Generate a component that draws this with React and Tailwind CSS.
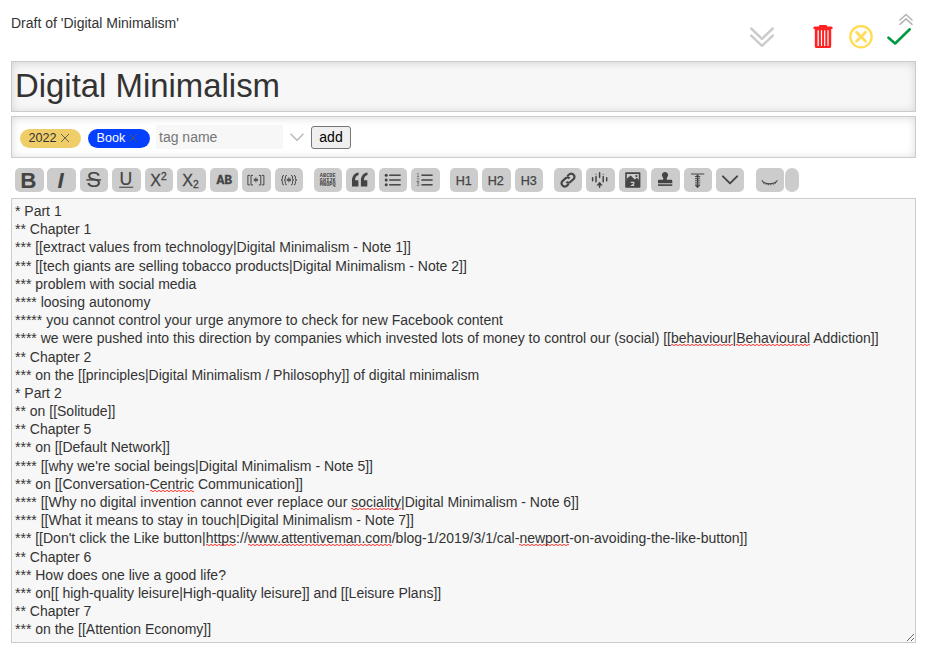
import React from 'react';

const INK = '#444';

function Tool({ children, className = '' }) {
  return (
    <button className={`h-6 w-[28.5px] shrink-0 rounded-[5px] bg-[#cccccc] ${className}`}>
      <svg viewBox="0 0 28.5 24" className="block h-6 w-[28.5px]" fill={INK} stroke="none">
        {children}
      </svg>
    </button>
  );
}

const sans = '"Liberation Sans", Arial, sans-serif';
const mono = '"Liberation Mono", monospace';

function T({ x = 14, y, size, family = sans, anchor = 'middle', children, ...rest }) {
  return (
    <text x={x} y={y} fontSize={size} fontFamily={family} textAnchor={anchor} {...rest}>
      {children}
    </text>
  );
}

function Heading({ n }) {
  return (
    <Tool>
      <T x="13.7" y="17" size="12.6" stroke={INK} strokeWidth="0.25">{`H${n}`}</T>
    </Tool>
  );
}

function Star() {
  return (
    <path d="M13.9 9.3V14.3M11.7 11L16.1 12.6M16.1 11L11.7 12.6" fill="none" stroke={INK} strokeWidth="1" />
  );
}

function Toolbar() {
  return (
    <div className="mt-[10px] ml-1 flex h-6">
      <div className="flex gap-[3.95px]">
        <Tool><T x="13.4" y="19.5" size="22.4" fontWeight="bold">B</T></Tool>
        <Tool><T x="13.5" y="19.5" size="22.4" fontWeight="bold" fontStyle="italic">I</T></Tool>
        <Tool>
          <T x="13.6" y="19.2" size="21.5">S</T>
          <rect x="6.3" y="11.2" width="14.8" height="1.4" />
        </Tool>
        <Tool>
          <T x="13.9" y="16.6" size="17.6" stroke={INK} strokeWidth="0.2">U</T>
          <rect x="7.2" y="18.7" width="14" height="1.1" />
        </Tool>
        <Tool>
          <T x="10.7" y="17.9" size="16" stroke={INK} strokeWidth="0.3">X</T>
          <T x="18.8" y="11.9" size="10.3" stroke={INK} strokeWidth="0.3">2</T>
        </Tool>
        <Tool>
          <T x="10.6" y="17.7" size="16" stroke={INK} strokeWidth="0.3">X</T>
          <T x="18.8" y="19.6" size="10.3" stroke={INK} strokeWidth="0.3">2</T>
        </Tool>
        <Tool>
          <T x="14.2" y="16" size="12" family={mono} fontWeight="bold" stroke={INK} strokeWidth="0.3" textLength="15.6" lengthAdjust="spacingAndGlyphs">AB</T>
        </Tool>
        <Tool>
          <path d="M7.9 7.4H5.9V16.9H7.9M11 7.4H9V16.9H11M16.8 7.4H18.8V16.9H16.8M19.9 7.4H21.9V16.9H19.9" fill="none" stroke={INK} strokeWidth="1" />
          <Star />
        </Tool>
        <Tool>
          <path d="M8.9 7.4Q7.4 7.4 7.4 9V10.8Q7.4 12.1 6 12.1Q7.4 12.1 7.4 13.4V15.3Q7.4 16.9 8.9 16.9M11.8 7.4Q10.3 7.4 10.3 9V10.8Q10.3 12.1 9 12.1Q10.3 12.1 10.3 13.4V15.3Q10.3 16.9 11.8 16.9M16 7.4Q17.5 7.4 17.5 9V10.8Q17.5 12.1 18.8 12.1Q17.5 12.1 17.5 13.4V15.3Q17.5 16.9 16 16.9M18.9 7.4Q20.4 7.4 20.4 9V10.8Q20.4 12.1 21.8 12.1Q20.4 12.1 20.4 13.4V15.3Q20.4 16.9 18.9 16.9" fill="none" stroke={INK} strokeWidth="1" />
          <Star />
        </Tool>
      </div>
      <div className="ml-[10.9px] flex gap-[3.95px]">
        <Tool>
          <T x="13.7" y="8.9" size="5.2" family={mono} fontWeight="bold" textLength="16">ABCDE</T>
          <T x="13.7" y="13.6" size="5.2" family={mono} fontWeight="bold" textLength="16">GHIJK</T>
          <T x="13.7" y="18.3" size="5.2" family={mono} fontWeight="bold" textLength="16">MNOPQ</T>
        </Tool>
        <Tool>
          <path d="M12.6 4.6C8.6 5 6 8.2 6 12.6V18.6H12.4V12.2H9.1C9.1 9.4 10.2 7.7 12.6 7.1Z" />
          <path d="M21.5 4.6C17.5 5 14.9 8.2 14.9 12.6V18.6H21.3V12.2H18C18 9.4 19.1 7.7 21.5 7.1Z" />
        </Tool>
        <Tool>
          {[7.2, 12, 16.8].map((y) => (
            <g key={y}>
              <circle cx="7.2" cy={y} r="1.5" />
              <rect x="10.2" y={y - 0.75} width="11.5" height="1.5" />
            </g>
          ))}
        </Tool>
        <Tool>
          {[7.2, 12, 16.8].map((y, i) => (
            <g key={y}>
              <T x="7" y={y + 1.6} size="5">{i + 1}</T>
              <rect x="10.4" y={y - 0.75} width="11.2" height="1.5" />
            </g>
          ))}
        </Tool>
      </div>
      <div className="ml-[10.2px] flex gap-[3.95px]">
        <Heading n={1} />
        <Heading n={2} />
        <Heading n={3} />
      </div>
      <div className="ml-[10.5px] flex gap-[3.95px]">
        <Tool>
          <g transform="translate(14 12.1) rotate(-42)" fill="none" stroke={INK} strokeWidth="2.1">
            <path d="M2.4 -0.2A3.3 3.3 0 0 0 -0.8 -3H-5.2A3.3 3.3 0 0 0 -5.2 3.4H-2" />
            <path d="M-2.4 0.2A3.3 3.3 0 0 0 0.8 3H5.2A3.3 3.3 0 0 0 5.2 -3.4H2" />
          </g>
        </Tool>
        <Tool>
          <g stroke={INK} strokeWidth="1.5" strokeLinecap="round">
            <path d="M6.6 9.8V12.8M10 8.6V13.8M13.6 4.8V9.6M17.2 8.6V13.8M20.7 9.8V12.8M13.6 16V19.3" />
            <path d="M10 6.2V6.4M17.2 6.2V6.4" strokeWidth="0.9" />
          </g>
          <path d="M13.6 13.8L16.8 17.6H10.4Z" />
        </Tool>
        <Tool>
          <rect x="6.2" y="4.2" width="15.2" height="15.6" rx="0.8" />
          <path d="M7.8 5.9H19.8V13.4L17.8 11.2L15.6 13L11.8 8.6L7.8 12.8Z" fill="#ccc" />
          <path d="M7.8 10.7L11.6 7.6L15.7 11.5L17.9 9.7L19.8 11.8V14H7.8Z" />
          <circle cx="17.4" cy="8" r="1.1" />
          <path d="M11.7 14.4H14.8V15.7L12.7 17.4H15.3" fill="none" stroke="#ccc" strokeWidth="1.1" />
        </Tool>
        <Tool>
          <path d="M14 4A3.1 3.1 0 0 1 16.3 9.2C15.6 10 15.6 11 16 11.8H20C21 11.8 21.3 12.3 21.3 13V15.2H7V13C7 12.3 7.4 11.8 8.2 11.8H12C12.4 11 12.4 10 11.7 9.2A3.1 3.1 0 0 1 14 4Z" />
          <rect x="7" y="16.3" width="14.3" height="1.6" />
        </Tool>
        <Tool>
          <rect x="7" y="5" width="13.2" height="2" fill="#888" />
          <rect x="12.9" y="6.5" width="1.3" height="13" />
          <path d="M11 8.6H16.2M11 10.7H16.2M11 12.8H16.2M11 14.9H16.2M11 17H16.2" stroke={INK} strokeWidth="0.9" />
          <path d="M10.8 17.3L13.5 20L16.3 17.3ZM10.8 9L13.5 6.8L16.3 9Z" />
        </Tool>
        <Tool>
          <path d="M6.9 8.3L14 15.4L21.1 8.3" fill="none" stroke={INK} strokeWidth="1.9" strokeLinecap="round" strokeLinejoin="round" />
        </Tool>
      </div>
      <div className="ml-[11.3px] flex gap-[0.5px]">
        <Tool>
          <path d="M6.2 12.8C8.5 16.8 18.5 16.8 21 12.8" fill="none" stroke={INK} strokeWidth="1.2" strokeLinecap="round" />
          <path d="M8.3 14.5L7.6 15.8M10.2 15.3L9.7 16.9M12.4 15.6L12.2 17.4M14.8 15.6L15 17.4M17 15.3L17.5 16.9M18.9 14.5L19.6 15.8" stroke={INK} strokeWidth="0.8" />
        </Tool>
        <button className="h-6 w-[14px] rounded-[7px] bg-[#cccccc]" />
      </div>
    </div>
  );
}

function Tag({ name, className }) {
  return (
    <span className={`flex h-[19px] items-center rounded-full pl-[8.6px] text-[12.6px] leading-[19px] ${className}`}>
      {name}
      <svg viewBox="0 0 10 10" className="ml-[3px] h-[10px] w-[10px]" stroke="#555" strokeWidth="0.9">
        <path d="M1 1L9 9M9 1L1 9" />
      </svg>
    </span>
  );
}

// "~word~" marks a word flagged by the spell checker
const LINES = [
  '* Part 1',
  '** Chapter 1',
  '*** [[extract values from technology|Digital Minimalism - Note 1]]',
  '*** [[tech giants are selling tobacco products|Digital Minimalism - Note 2]]',
  '*** problem with social media',
  '**** loosing autonomy',
  '***** you cannot control your urge anymore to check for new Facebook content',
  '**** we were pushed into this direction by companies which invested lots of money to control our (social) [[~behaviour~|~Behavioural~ Addiction]]',
  '** Chapter 2',
  '*** on the [[principles|Digital Minimalism / Philosophy]] of digital minimalism',
  '* Part 2',
  '** on [[Solitude]]',
  '** Chapter 5',
  '*** on [[Default Network]]',
  "**** [[why we're social beings|Digital Minimalism - Note 5]]",
  '*** on [[Conversation-~Centric~ Communication]]',
  '**** [[Why no digital invention cannot ever replace our ~sociality~|Digital Minimalism - Note 6]]',
  '**** [[What it means to stay in touch|Digital Minimalism - Note 7]]',
  "*** [[Don't click the Like button|~https~://~www.attentiveman.com~/blog-1/2019/3/1/cal-~newport~-on-avoiding-the-like-button]]",
  '** Chapter 6',
  '*** How does one live a good life?',
  '*** on[[ high-quality leisure|High-quality leisure]] and [[Leisure Plans]]',
  '** Chapter 7',
  '*** on the [[Attention Economy]]',
];

function Line({ text }) {
  return (
    <div className="whitespace-pre">
      {text.split('~').map((part, i) =>
        i % 2 ? (
          <span
            key={i}
            className="bg-[image:linear-gradient(90deg,#ff3030cc_50%,#ff303030_50%),linear-gradient(90deg,#ff303030_50%,#ff3030cc_50%)] bg-[length:4px_1px] bg-[position:0_calc(100%_-_1px),0_100%] bg-repeat-x"
          >
            {part}
          </span>
        ) : (
          part
        )
      )}
    </div>
  );
}

export default function App() {
  return (
    <div className='relative h-[663px] w-[931px] overflow-hidden bg-white pl-[11px] pr-[15px] text-[14px] leading-[18.2px] text-[#333] font-["Liberation_Sans",Arial,sans-serif]'>
      <header className="flex h-[61px] justify-between">
        <span className="mt-[14px]">Draft of 'Digital Minimalism'</span>
        <div className="mt-[25px] mr-[5px] flex items-start">
          <svg viewBox="0 0 24 24" className="mr-[39px] h-6 w-6" fill="none" stroke="#ccc" strokeWidth="2.5" strokeLinecap="round" strokeLinejoin="round">
            <path d="M1.2 3.5L12 13.8L22.8 3.5M1.2 10.6L12 20.9L22.8 10.6" />
          </svg>
          <svg viewBox="0 0 20 24" className="mr-4 h-6 w-5" fill="#f22">
            <path d="M6 0.8Q6 0 7 0H13Q14 0 14 0.8V1.4H18.5Q19.6 1.4 19.6 2.9V3.9H0.4V2.9Q0.4 1.4 1.5 1.4H6Z" />
            <path fillRule="evenodd" d="M1.8 3.6H18.2V21.3Q18.2 23 17 23H3Q1.8 23 1.8 21.3ZM4.5 5.3V21H5.8V5.3ZM7.9 5.3V21H9.1V5.3ZM11.1 5.3V21H12.3V5.3ZM14.4 5.3V21H15.6V5.3Z" />
          </svg>
          <svg viewBox="0 0 24 24" className="mr-[14px] h-6 w-6" fill="none" stroke="#fd5" strokeLinecap="round">
            <circle cx="12" cy="11.7" r="10.7" strokeWidth="2.3" />
            <path d="M7.5 7.2L16.5 16.2M16.5 7.2L7.5 16.2" strokeWidth="2.7" />
          </svg>
          <svg viewBox="0 0 24 24" className="h-6 w-6" fill="none" stroke="#094" strokeWidth="2.6" strokeLinecap="round" strokeLinejoin="round">
            <path d="M1.5 12.7L8.1 18.5L22.8 4.3" />
          </svg>
        </div>
      </header>
      <svg viewBox="0 0 14 12" className="absolute top-[13px] left-[898.5px] h-3 w-[14px]" fill="none" stroke="#b4b4b4" strokeWidth="1.6" strokeLinecap="round" strokeLinejoin="round">
        <path d="M1 7L7 1.5L13 7M1 11.3L7 5.8L13 11.3" />
      </svg>

      <div className="h-[51px] border border-[#ccc] bg-[#f7f7f7] pl-[3px] text-[32.9px] leading-[48px] shadow-[inset_0_1px_8px_rgba(0,0,0,0.15)]">
        Digital Minimalism
      </div>

      <div className="mt-1 flex h-[42px] items-center border border-[#ccc] pl-2 shadow-[inset_0_1px_8px_rgba(0,0,0,0.15)]">
        <Tag name="2022" className="mt-[2px] w-[61px] bg-[#efce6a]" />
        <Tag name="Book" className="mt-[2px] ml-[7px] w-[62px] bg-[#0540ff] text-white" />
        <input placeholder="tag name" className="ml-[6px] h-6 w-[127px] bg-[#f7f7f7] pl-[3px] placeholder:text-[#757575]" />
        <svg viewBox="0 0 14 9" className="ml-[6.5px] h-[9px] w-[14px]" fill="none" stroke="#bbb" strokeWidth="1.6" strokeLinecap="round" strokeLinejoin="round">
          <path d="M1 1.2L7 7.3L13 1.2" />
        </svg>
        <button className="ml-[7.5px] h-[23px] w-10 rounded-[3px] border border-[#767676] bg-[#efefef] leading-[20px] text-black">add</button>
      </div>

      <Toolbar />

      <div className="mt-[6px] h-[445px] resize overflow-hidden border border-[#ccc] bg-[#f7f7f7] px-[3px] pt-[3px] leading-[18.18px]">
        {LINES.map((text, i) => (
          <Line key={i} text={text} />
        ))}
      </div>
    </div>
  );
}
